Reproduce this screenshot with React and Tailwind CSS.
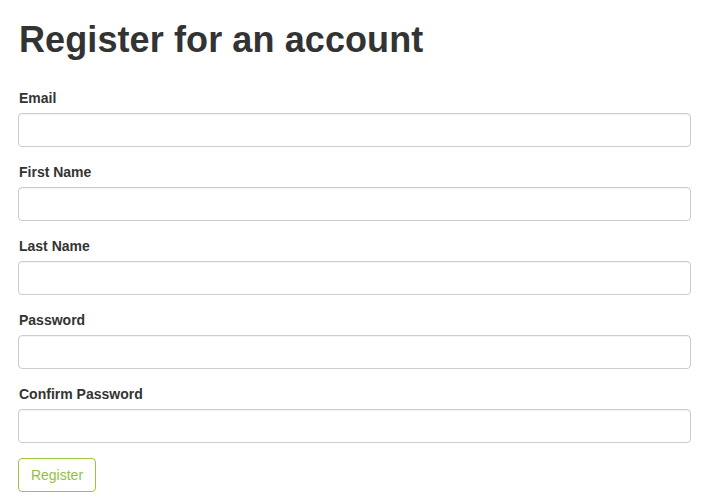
import React from "react";

const fields = ["Email", "First Name", "Last Name", "Password", "Confirm Password"];

export default function App() {
  return (
    <div className="min-h-screen bg-white text-[#333333] px-[18px]" style={{ fontFamily: '"Liberation Sans", Arial, sans-serif' }}>
      <h1 className="pt-[20px] pl-px text-[36px] leading-[40px] font-bold tracking-[0.1px]">Register for an account</h1>
      <form className="mt-[28px] w-[673px]">
        {fields.map((f) => (
          <div key={f} className="mb-[15px]">
            <label className="block pl-px text-[14px] leading-[20px] font-bold mb-[5px]">{f}</label>
            <input
              type={f.includes("Password") ? "password" : "text"}
              className="block w-full h-[34px] rounded-[4px] border border-[#cccccc] bg-white px-3 text-[14px] outline-none shadow-[inset_0_1px_1px_rgba(0,0,0,0.05)]"
            />
          </div>
        ))}
        <button
          type="button"
          className="h-[34px] w-[78px] rounded-[4px] border border-[#9dc63d] bg-white text-[14px] text-[#8fc23f]"
        >
          Register
        </button>
      </form>
    </div>
  );
}
